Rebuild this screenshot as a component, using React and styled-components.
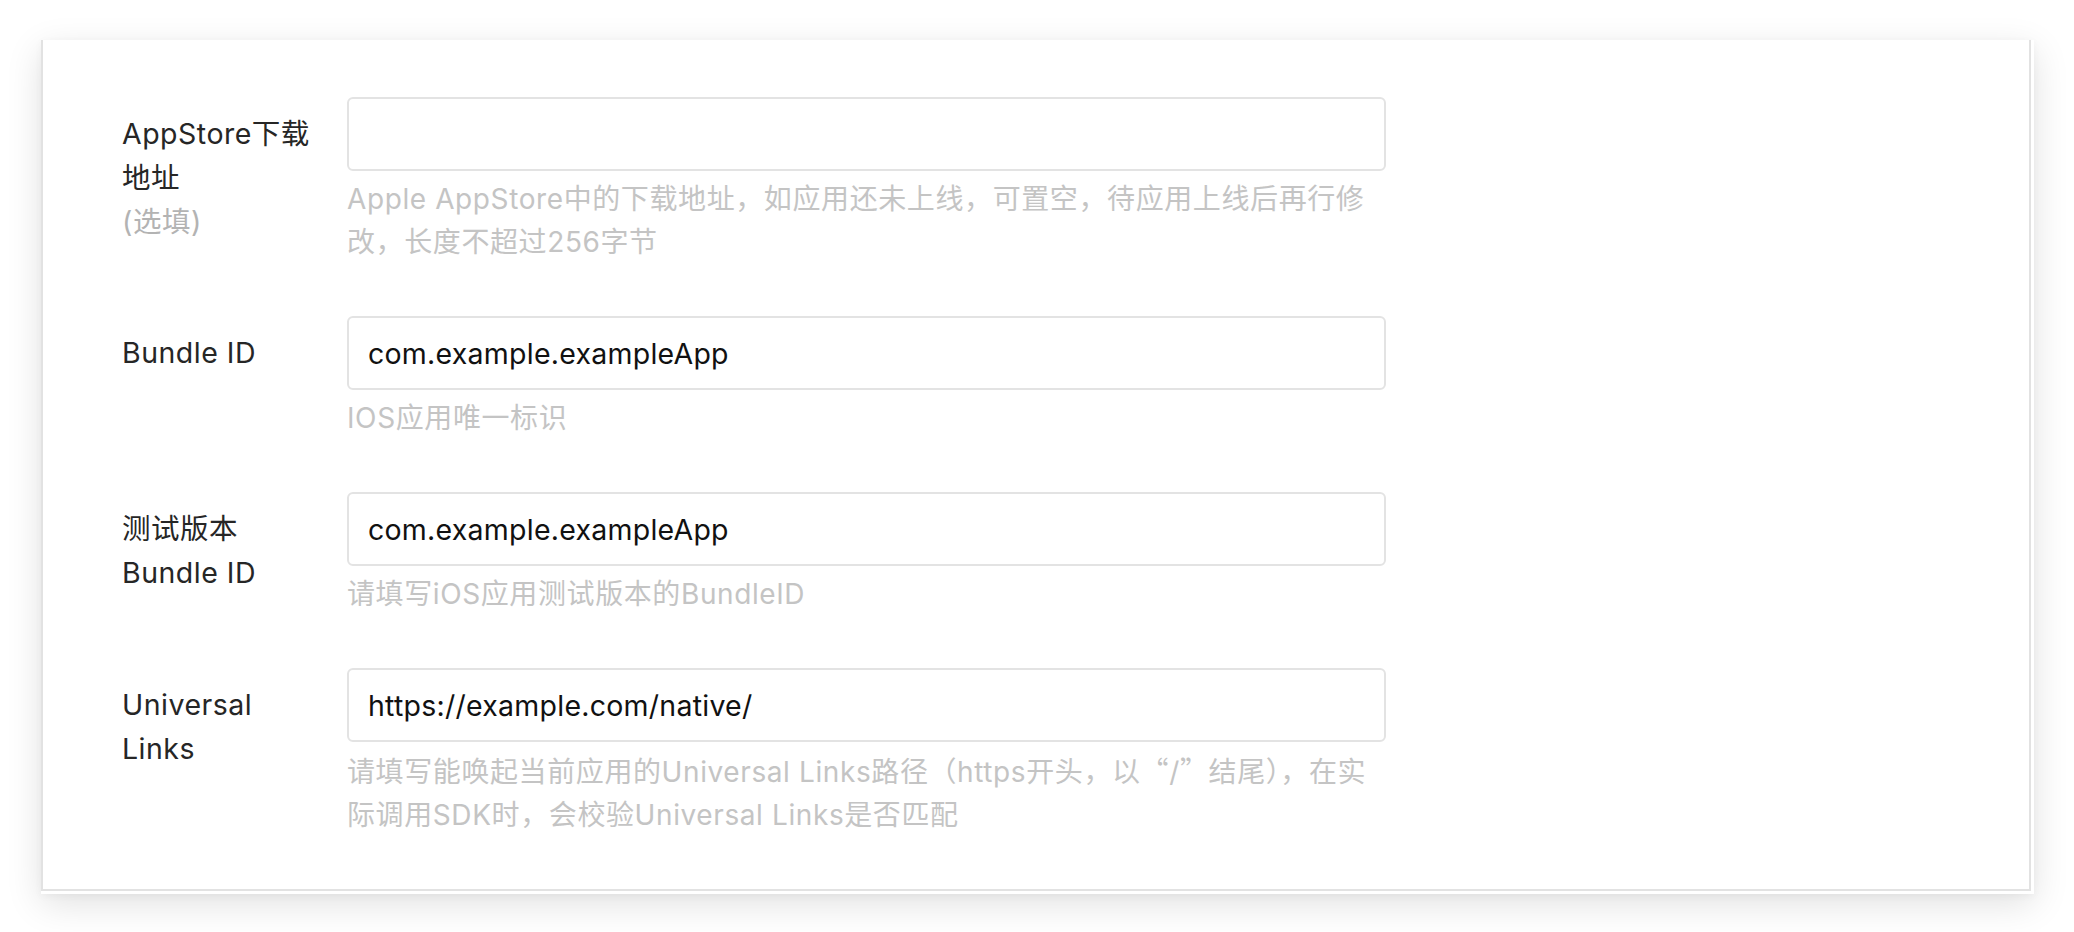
import React from "react";
import styled, { createGlobalStyle } from "styled-components";

const GlobalStyle = createGlobalStyle`
  html, body {
    margin: 0;
    padding: 0;
    background: #ffffff;
    overflow: hidden;
  }
  body {
    font-family: Inter, "Noto Sans CJK SC", sans-serif;
  }
`;

const Page = styled.div`
  width: 2074px;
  height: 932px;
  box-sizing: border-box;
  padding: 40px 40px 0 41px;
`;

const Frame = styled.div`
  background: #ffffff;
  padding: 0 3px 3px 0;
  box-shadow: 0 10px 34px rgba(0, 0, 0, 0.12), 0 2px 8px rgba(0, 0, 0, 0.04);
`;

const Card = styled.div`
  border: 2px solid #e2e2e2;
  border-top: none;
  padding: 57px 0 52px 79px;
  display: flex;
  flex-direction: column;
  gap: 52px;
`;

const Row = styled.div`
  display: flex;
  align-items: flex-start;
`;

const Label = styled.div`
  width: 200px;
  margin-right: 25px;
  padding-top: 15px;
  font-size: 28.5px;
  letter-spacing: 0.5px;
  line-height: 44px;
  color: #262626;
  flex-shrink: 0;
`;

const Optional = styled.span`
  display: block;
  color: #b3b3b3;
`;

const Field = styled.div`
  width: 1039px;
  display: flex;
  flex-direction: column;
`;

const Input = styled.input`
  box-sizing: border-box;
  width: 100%;
  height: 74px;
  border: 2px solid #e3e3e3;
  border-radius: 6px;
  padding: 0 19px;
  font-family: Inter, "Noto Sans CJK SC", sans-serif;
  font-size: 28.5px;
  letter-spacing: 0.25px;
  color: #111111;
  background: #ffffff;
  outline: none;
`;

const Hint = styled.div`
  margin-top: 7px;
  font-size: 28px;
  letter-spacing: 0.6px;
  line-height: 43px;
  color: #c4c4c4;
`;

const Quote = styled.span`
  font-family: "Noto Sans CJK SC", sans-serif;
`;

const rows = [
  {
    label: (
      <>
        AppStore下载
        <br />
        地址
        <Optional>(选填)</Optional>
      </>
    ),
    value: "",
    hint: "Apple AppStore中的下载地址，如应用还未上线，可置空，待应用上线后再行修改，长度不超过256字节",
  },
  {
    label: "Bundle ID",
    value: "com.example.exampleApp",
    hint: "IOS应用唯一标识",
  },
  {
    label: (
      <>
        测试版本
        <br />
        Bundle ID
      </>
    ),
    value: "com.example.exampleApp",
    hint: "请填写iOS应用测试版本的BundleID",
  },
  {
    label: (
      <>
        Universal
        <br />
        Links
      </>
    ),
    value: "https://example.com/native/",
    hint: (
      <>
        请填写能唤起当前应用的Universal Links路径（https开头，以<Quote>“</Quote>/<Quote>”</Quote>结尾），在实际调用SDK时，会校验Universal Links是否匹配
      </>
    ),
  },
];

export default function App() {
  return (
    <>
      <GlobalStyle />
      <Page>
        <Frame>
          <Card>
            {rows.map((r, i) => (
              <Row key={i}>
                <Label>{r.label}</Label>
                <Field>
                  <Input type="text" value={r.value} readOnly />
                  <Hint>{r.hint}</Hint>
                </Field>
              </Row>
            ))}
          </Card>
        </Frame>
      </Page>
    </>
  );
}
